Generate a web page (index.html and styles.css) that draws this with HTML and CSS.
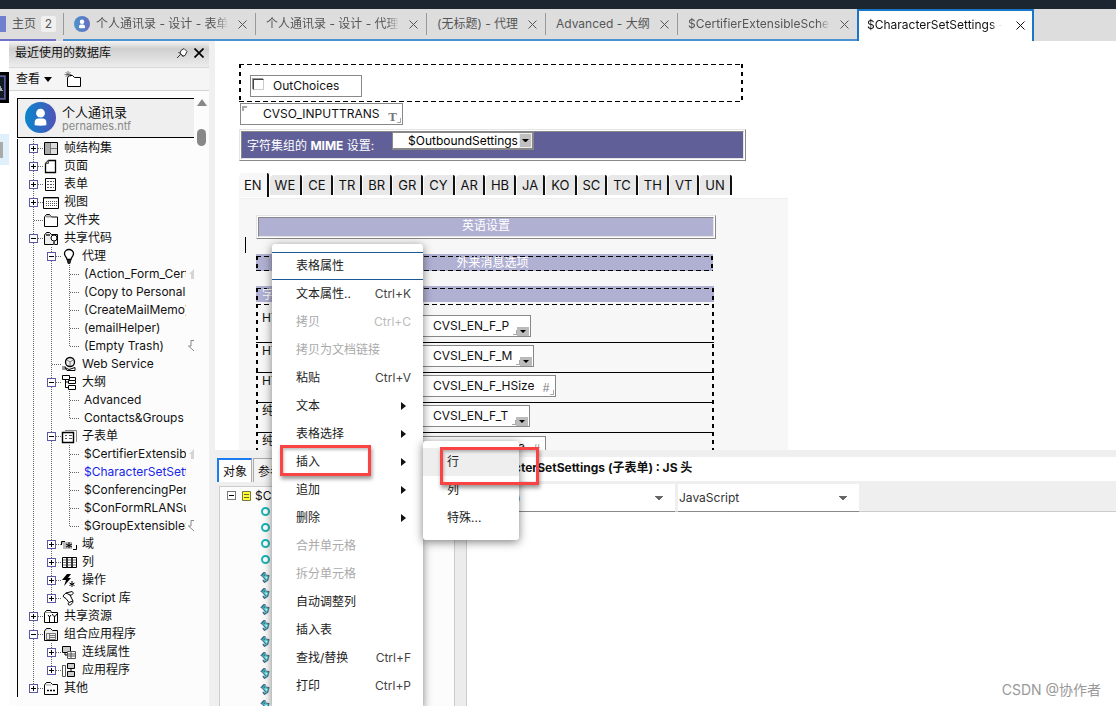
FILE: index.html
```html
<!DOCTYPE html>
<html lang="zh-CN">
<head>
<meta charset="utf-8">
<title>$CharacterSetSettings - 子表单</title>
<link rel="stylesheet" href="styles.css">
</head>
<body>
<svg class="defs" aria-hidden="true">
  <defs>
    <linearGradient id="avatar" x1="0" x2="1"><stop offset="0" stop-color="#0a86cc"/><stop offset="1" stop-color="#4f52b8"/></linearGradient>
    <linearGradient id="avatar-soft" x1="0" x2="1"><stop offset="0" stop-color="#4a93cc"/><stop offset="1" stop-color="#6a6cc0"/></linearGradient>
  </defs>
  <symbol id="x" viewBox="0 0 9 9"><path d="M.5.5l8 8M8.500.5l-8 8" fill="none" stroke="currentColor"/></symbol>
  <symbol id="frameset" viewBox="0 0 16 16"><path d="M1.500 2.500h13v12h-13z" fill="#ddd" stroke="#000"/><path d="M2 3h5v11H2z" fill="#aaa"/><path d="M7.500 3v11M8 8.500h6" stroke="#777"/></symbol>
  <symbol id="page" viewBox="0 0 16 16"><path d="M5.500 2.500h7v12h-10v-9z" fill="#fff" stroke="#000" stroke-width="1.300"/><path d="M2.500 5.500h3v-3" fill="#aaa" stroke="#555"/></symbol>
  <symbol id="form" viewBox="0 0 16 16"><path d="M2.500 2.500h10v12h-10z" fill="#fff" stroke="#000"/><path d="M4 5.500h2m1 0h4M4 8.500h2m1 0h4M4 11.500h2m1 0h4" stroke="#555" stroke-dasharray="2 1"/></symbol>
  <symbol id="view" viewBox="0 0 16 16"><path d="M.5 3.500h15v11h-15z" fill="#fff" stroke="#000"/><path d="M1 4.500h14" stroke="#999"/><path d="M3 7.500h11M3 9.500h11M3 11.500h11" stroke="#555" stroke-dasharray="1 1"/></symbol>
  <symbol id="folder" viewBox="0 0 16 16"><path d="M1.500 14.500V5l2-2.500h3l2 2.500h6v9.500z" fill="#fff" stroke="#000"/><path d="M3 4.500h5" stroke="#999" stroke-width="2"/></symbol>
  <symbol id="code" viewBox="0 0 16 16"><path d="M1.500 14.500V5l2-2.500h3l2 2h6v10z" fill="#eee" stroke="#000"/><circle cx="11" cy="8" r="3" fill="#fff" stroke="#000"/><path d="M11 11v4M3 5h4" stroke="#555" stroke-width="2"/></symbol>
  <symbol id="bulb" viewBox="0 0 16 16"><path d="M6 11.500C6 9 3.500 8.500 3.500 5.500a4.500 4 0 0 1 9 0c0 3-2.500 3.500-2.500 6z" fill="#fff" stroke="#000" stroke-width="1.300"/><path d="M6 12h4v2l-1 2H7l-1-2z" fill="#222"/></symbol>
  <symbol id="web" viewBox="0 0 16 16"><circle cx="9" cy="6" r="4.500" fill="#eee" stroke="#000" stroke-width="1.300"/><path d="M6 4l3 2 3-2M9 6v4" fill="none" stroke="#777"/><path d="M1 10h4v4H1z" fill="#999"/><path d="M4 11.500l4 2 6-2v3H6z" fill="#fff" stroke="#000"/></symbol>
  <symbol id="outline" viewBox="0 0 16 16"><path d="M1.500 1.500h7v4h-7zM7.500 6.500h7v3h-7zM7.500 11.500h7v4h-7zM4.500 6v7.500h3M4.500 8h3M9 3.500h5.500V6" fill="#fff" stroke="#000"/></symbol>
  <symbol id="subform" viewBox="0 0 16 16"><path d="M4 2.500h11.500V14" fill="none" stroke="#888"/><path d="M1.500 4.500h11v10h-11z" fill="#fff" stroke="#000" stroke-width="1.400"/><path d="M4 7.500h2m2 0h3M4 10.500h2m2 0h3" stroke="#555"/></symbol>
  <symbol id="field" viewBox="0 0 16 16"><path d="M0 6h11v7H2V8H0z" fill="#bbb"/><path d="M.5 9V5.500H4M15.500 9v4.500H12" fill="none" stroke="#000"/><path d="M8 6v6M5 8l6 3M11 8l-6 3" stroke="#000"/></symbol>
  <symbol id="column" viewBox="0 0 16 16"><path d="M1.500 3.500h14v10h-14z" fill="#fff" stroke="#000"/><path d="M6 3v11M11 3v11" stroke="#000" stroke-width="1.600"/><path d="M2 6h13M2 8.500h13M2 11h13" stroke="#333" stroke-width=".7"/></symbol>
  <symbol id="action" viewBox="0 0 16 16"><path d="M6 2h4L7 6h3L3 14l2-6H1z" fill="#000"/><path d="M11 9v6M8.500 11l5 2.500M13.500 11l-5 2.500" stroke="#000"/></symbol>
  <symbol id="script" viewBox="0 0 16 16"><path d="M5 3l6-1.500c2 1 1 3-.5 3.500L9 5l3 6c0 2-2 4-3.500 4-2 0-1.500-2-.5-2.500L5 8.500 2.500 7c-1-1 1-3 2.500-4zM5 3l4 2M8 12.500l4-1.500" fill="#fff" stroke="#000"/></symbol>
  <symbol id="resource" viewBox="0 0 16 16"><path d="M1.500 14.500V5l2-2.500h4l1 2h6v10z" fill="#fff" stroke="#000"/><path d="M6.500 14V9l-1.500-2M6.500 9L8 7M11.500 14V8M9.500 6c0 3 4 3 4 0" fill="none" stroke="#000"/><path d="M3 4.500h5" stroke="#999"/></symbol>
  <symbol id="composite" viewBox="0 0 16 16"><path d="M1.500 14.500V5l2-2.500h4l2 2h5v10z" fill="#eee" stroke="#000"/><path d="M3.500 7.500h9v6h-9zM6.500 8v5M7 9.500h5M7 11.500h5" fill="none" stroke="#777"/></symbol>
  <symbol id="wiring" viewBox="0 0 16 16"><path d="M1.500 2.500h8v6h-8zM4 9v2h3" fill="#ccc" stroke="#000"/><path d="M6.500 7.500h8v7h-8zM7 10h7M7 12h7M10 8v6" fill="#fff" stroke="#555"/></symbol>
  <symbol id="app" viewBox="0 0 16 16"><path d="M1.500 3.500h3v11h-3z" fill="#fff" stroke="#555"/><path d="M6.500 1.500h7v5h-7zM6.500 9.500h7v5h-7zM10 7v2" fill="#ccc" stroke="#000"/></symbol>
  <symbol id="other" viewBox="0 0 16 16"><path d="M1.500 14.500V5l2-2.500h4l2 2h5v10z" fill="#fff" stroke="#000"/><path d="M3 5h5" stroke="#999"/><path d="M4 10.500h2m1 0h2m1 0h2" stroke="#000" stroke-width="1.500"/></symbol>
  <symbol id="up" viewBox="0 0 6 12"><path d="M6 1L1 6h2v5h3z" fill="#d5d5d5"/></symbol>
  <symbol id="down" viewBox="0 0 6 12"><path d="M6 11L.5 6H3V.5h3" fill="none" stroke="#888"/></symbol>
  <symbol id="event" viewBox="0 0 10 12"><path d="M5.500 1.500l-3 3 4 5M1 5l3-3.500M4 4l4.500 1-1 4-3 2-1.500-2" fill="none" stroke="#4d6d88" stroke-width="1.800"/><path d="M5.500 2l-2.500 2.500 3.500 4M5 4.500l3 1-1 3-2.500 1.500" fill="none" stroke="#2ee6e6"/></symbol>
  <symbol id="person" viewBox="0 0 32 32"><circle cx="16" cy="11.500" r="4.500" fill="#fff"/><path d="M10 24v-3q0-4 4-4h4q4 0 4 4v3q-6 1-12 0z" fill="#fff"/></symbol>
</svg>

<header class="titlebar"></header>
<nav class="tabs" aria-label="窗口">
  <div class="home"><i class="home-mark"></i><a href="#home">主页</a><span class="count">2</span></div>
  <div class="tab tab-a"><svg class="face" viewBox="0 0 32 32"><circle cx="16" cy="16" r="16" fill="url(#avatar-soft)"/><use href="#person"/></svg><a href="#t1">个人通讯录 - 设计 - 表单</a><button aria-label="关闭"><svg><use href="#x"/></svg></button></div>
  <div class="tab tab-b"><a href="#t2">个人通讯录 - 设计 - 代理</a><button aria-label="关闭"><svg><use href="#x"/></svg></button></div>
  <div class="tab tab-c"><a href="#t3">(无标题) - 代理</a><button aria-label="关闭"><svg><use href="#x"/></svg></button></div>
  <div class="tab tab-d"><a href="#t4">Advanced - 大纲</a><button aria-label="关闭"><svg><use href="#x"/></svg></button></div>
  <div class="tab tab-e"><a href="#t5">$CertifierExtensibleSchema</a><button aria-label="关闭"><svg><use href="#x"/></svg></button></div>
  <div class="tab active"><a href="#t6">$CharacterSetSettings - 子表单</a><button aria-label="关闭"><svg><use href="#x"/></svg></button></div>
</nav>

<div class="workspace">
  <div class="rail"><div class="rail-on"><i></i></div><div class="rail-off"><i></i></div></div>

  <aside class="sidebar">
    <div class="side-title"><h2>最近使用的数据库</h2>
      <button aria-label="固定"><svg class="pin" viewBox="0 0 12 12"><path d="M5 3.500l3-2 3 3-2 4-2 .5-3-3zM4.500 7.500L1 11M2.500 5l5 5" fill="#fff" stroke="#333"/></svg></button>
      <button aria-label="关闭"><svg class="shut" viewBox="0 0 10 10"><path d="M.5.5l9 9M9.500.5l-9 9" stroke="#000" stroke-width="1.700"/></svg></button></div>
    <div class="side-tools"><button>查看<i class="drop"></i></button>
      <button aria-label="新建文件夹"><svg class="newfolder" viewBox="0 0 18 17"><path d="M3.500 15.500v-9l2-2h3l2 2h6v9z" fill="#fff" stroke="#000"/><path d="M4 0v7M.5 3.500h7M1.500 1l5 5M6.500 1l-5 5" stroke="#555" stroke-width=".8"/></svg></button></div>
    <div class="side-body">
      <div class="tree-col">
        <div class="db"><svg viewBox="0 0 32 32"><circle cx="16" cy="16" r="16" fill="url(#avatar)"/><use href="#person"/></svg><div><strong>个人通讯录</strong><small>pernames.ntf</small></div></div>
        <ul class="tree">
          <li><div class="row"><button class="tg plus" aria-label="展开"></button><svg><use href="#frameset"/></svg><span>帧结构集</span></div></li>
          <li><div class="row"><button class="tg plus" aria-label="展开"></button><svg><use href="#page"/></svg><span>页面</span></div></li>
          <li><div class="row"><button class="tg plus" aria-label="展开"></button><svg><use href="#form"/></svg><span>表单</span></div></li>
          <li><div class="row"><button class="tg plus" aria-label="展开"></button><svg><use href="#view"/></svg><span>视图</span></div></li>
          <li><div class="row"><i class="tg-none"></i><svg><use href="#folder"/></svg><span>文件夹</span></div></li>
          <li><div class="row"><button class="tg" aria-label="折叠"></button><svg><use href="#code"/></svg><span>共享代码</span></div>
            <ul>
              <li><div class="row"><button class="tg" aria-label="折叠"></button><svg><use href="#bulb"/></svg><span>代理</span></div>
                <ul class="leaves">
                  <li><div class="row"><span>(Action_Form_Certifier)</span><svg class="scroll"><use href="#up"/></svg></div></li>
                  <li><div class="row"><span>(Copy to Personal</span></div></li>
                  <li><div class="row"><span>(CreateMailMemo)</span></div></li>
                  <li><div class="row"><span>(emailHelper)</span></div></li>
                  <li><div class="row"><span>(Empty Trash)</span><svg class="scroll"><use href="#down"/></svg></div></li>
                </ul></li>
              <li><div class="row"><i class="tg-none"></i><svg><use href="#web"/></svg><span>Web Service</span></div></li>
              <li><div class="row"><button class="tg" aria-label="折叠"></button><svg><use href="#outline"/></svg><span>大纲</span></div>
                <ul class="leaves">
                  <li><div class="row"><span>Advanced</span></div></li>
                  <li><div class="row"><span>Contacts&amp;Groups</span></div></li>
                </ul></li>
              <li><div class="row"><button class="tg" aria-label="折叠"></button><svg><use href="#subform"/></svg><span>子表单</span></div>
                <ul class="leaves">
                  <li><div class="row"><span>$CertifierExtensibleSchema</span><svg class="scroll"><use href="#up"/></svg></div></li>
                  <li><div class="row current"><span>$CharacterSetSettings</span></div></li>
                  <li><div class="row"><span>$ConferencingPerson</span></div></li>
                  <li><div class="row"><span>$ConFormRLANSub</span></div></li>
                  <li><div class="row"><span>$GroupExtensibleSchema</span><svg class="scroll"><use href="#down"/></svg></div></li>
                </ul></li>
              <li><div class="row"><button class="tg plus" aria-label="展开"></button><svg><use href="#field"/></svg><span>域</span></div></li>
              <li><div class="row"><button class="tg plus" aria-label="展开"></button><svg><use href="#column"/></svg><span>列</span></div></li>
              <li><div class="row"><button class="tg plus" aria-label="展开"></button><svg><use href="#action"/></svg><span>操作</span></div></li>
              <li><div class="row"><button class="tg plus" aria-label="展开"></button><svg><use href="#script"/></svg><span>Script 库</span></div></li>
            </ul></li>
          <li><div class="row"><button class="tg plus" aria-label="展开"></button><svg><use href="#resource"/></svg><span>共享资源</span></div></li>
          <li><div class="row"><button class="tg" aria-label="折叠"></button><svg><use href="#composite"/></svg><span>组合应用程序</span></div>
            <ul>
              <li><div class="row"><button class="tg plus" aria-label="展开"></button><svg><use href="#wiring"/></svg><span>连线属性</span></div></li>
              <li><div class="row"><button class="tg plus" aria-label="展开"></button><svg><use href="#app"/></svg><span>应用程序</span></div></li>
            </ul></li>
          <li><div class="row"><button class="tg plus" aria-label="展开"></button><svg><use href="#other"/></svg><span>其他</span></div></li>
        </ul>
      </div>
      <div class="scrollbar"><i class="sb-up"></i><i class="sb-thumb"></i></div>
    </div>
  </aside>

  <main class="main">
    <section class="form">
      <div class="choices dashed"><label class="field check"><input type="checkbox">OutChoices</label></div>
      <div class="field trans"><i class="corner-tl"></i><span>CVSO_INPUTTRANS</span><b class="kind">T</b><i class="corner"></i></div>
      <div class="bevel mime"><div class="fill"><span>字符集组的 <b>MIME</b> 设置:</span>
        <div class="combo"><span>$OutboundSettings</span><button aria-label="选择"><i></i></button></div></div></div>
      <div class="langs">
        <button class="on">EN</button><button>WE</button><button>CE</button><button>TR</button><button>BR</button><button>GR</button><button>CY</button><button>AR</button><button>HB</button><button>JA</button><button>KO</button><button>SC</button><button>TC</button><button>TH</button><button>VT</button><button>UN</button>
      </div>
      <div class="panel">
        <div class="bevel lang-title"><div class="fill">英语设置</div></div>
        <i class="caret"></i>
        <div class="strip"><div class="dashed">外来消息选项</div></div>
        <div class="opts">
          <div class="opts-head">字符集选项</div>
          <div class="opt"><span>HTML</span><div class="field"><span>CVSI_EN_F_P</span><i class="corner"></i><i class="arrow"></i></div></div>
          <div class="opt"><span>HTML</span><div class="field"><span>CVSI_EN_F_M</span><i class="corner"></i><i class="arrow"></i></div></div>
          <div class="opt"><span>HTML</span><div class="field"><span>CVSI_EN_F_HSize</span><b class="kind">#</b><i class="corner"></i></div></div>
          <div class="opt"><span>纯文本</span><div class="field"><span>CVSI_EN_F_T</span><i class="corner"></i><i class="arrow"></i></div></div>
          <div class="opt"><span>纯文本</span><div class="field"><span>CVSI_EN_F_Siza</span><b class="kind">#</b><i class="corner"></i></div></div>
        </div>
      </div>
    </section>

    <section class="lower">
      <div class="objects">
        <div class="obj-tabs"><button class="on">对象</button><button>参考</button></div>
        <div class="obj-tree">
          <div class="obj-root"><button class="tg gray" aria-label="折叠"></button><svg viewBox="0 0 9 10"><path d="M.5.5h8v9h-8z" fill="#ff3" stroke="#774"/><path d="M2 3.500h5M2 6.500h5" stroke="#663"/></svg><span>$CharacterSetSettings</span></div>
          <i class="ring"></i><i class="ring"></i><i class="ring"></i><i class="ring"></i>
          <svg><use href="#event"/></svg><svg><use href="#event"/></svg><svg><use href="#event"/></svg><svg><use href="#event"/></svg><svg><use href="#event"/></svg><svg><use href="#event"/></svg><svg><use href="#event"/></svg><svg><use href="#event"/></svg><svg><use href="#event"/></svg>
        </div>
      </div>
      <div class="code">
        <h3>$CharacterSetSettings (子表单) : JS 头</h3>
        <div class="pickers">
          <select class="run" aria-label="运行"><option>客户机(C)</option></select>
          <select class="lang" aria-label="语言"><option>JavaScript</option></select>
        </div>
        <textarea aria-label="代码"></textarea>
      </div>
    </section>
  </main>
</div>

<div class="menu" role="menu">
  <button class="first" role="menuitem">表格属性</button>
  <button role="menuitem">文本属性..<kbd>Ctrl+K</kbd></button>
  <button role="menuitem" disabled>拷贝<kbd>Ctrl+C</kbd></button>
  <button role="menuitem" disabled>拷贝为文档链接</button>
  <button role="menuitem">粘贴<kbd>Ctrl+V</kbd></button>
  <button role="menuitem">文本<i class="sub"></i></button>
  <button role="menuitem">表格选择<i class="sub"></i></button>
  <button role="menuitem">插入<i class="sub"></i></button>
  <button role="menuitem">追加<i class="sub"></i></button>
  <button role="menuitem">删除<i class="sub"></i></button>
  <button role="menuitem" disabled>合并单元格</button>
  <button role="menuitem" disabled>拆分单元格</button>
  <button role="menuitem">自动调整列</button>
  <button role="menuitem">插入表</button>
  <button role="menuitem">查找/替换<kbd>Ctrl+F</kbd></button>
  <button role="menuitem">打印<kbd>Ctrl+P</kbd></button>
</div>
<div class="menu submenu" role="menu">
  <button class="hover" role="menuitem">行</button>
  <button role="menuitem">列</button>
  <button role="menuitem">特殊...</button>
</div>
<i class="mark mark-insert"></i>
<i class="mark mark-row"></i>
<p class="watermark">CSDN @协作者</p>
</body>
</html>
```
FILE: styles.css
```css
* { box-sizing: border-box; }
html, body { height: 100%; }
body {
  margin: 0; display: flex; flex-direction: column; overflow: hidden; position: relative;
  font: 12px/18px Inter, "Noto Sans CJK SC", sans-serif; color: #111; background: #fff;
}
button, select, textarea { font: inherit; color: inherit; border: 0; padding: 0; margin: 0; background: none; }
button { display: block; text-align: left; white-space: nowrap; }
a { color: inherit; text-decoration: none; }
svg, i { display: block; flex: none; }
h2, h3, p, ul { margin: 0; padding: 0; list-style: none; }
.defs { position: absolute; width: 0; height: 0; }

/* window tabs */
.titlebar { flex: none; height: 9px; background: #1b2630; }
.tabs { flex: none; display: flex; height: 32px; background: #ddd; color: #555; }
.home { display: flex; align-items: center; width: 56px; border-bottom: 2px solid #6f70c8; margin-right: 7px; }
.home-mark { width: 6px; height: 16px; background: #7080cf; margin-right: 6px; }
.home a { width: 30px; white-space: nowrap; }
.count { width: 16px; height: 16px; line-height: 16px; text-align: center; background: #f0f0f0; border-radius: 2px; }
.tab { display: flex; align-items: center; padding-right: 8px; border-bottom: 2px solid #4c92d0; min-width: 0; }
.tab::before { content: ""; width: 1px; height: 22px; background: #999; margin-right: 10px; }
.tab a { flex: 1; overflow: hidden; white-space: nowrap; margin-right: 10px; -webkit-mask: linear-gradient(to left, transparent, #000 12px); mask: linear-gradient(to left, transparent, #000 12px); }
.tab button, .tab svg { width: 9px; height: 9px; }
.tab .face { width: 16px; height: 16px; margin-right: 6px; }
.tab-a { width: 192px; }
.tab-b { width: 171px; }
.tab-c { width: 119px; }
.tab-d { width: 132px; }
.tab-c a, .tab-d a { -webkit-mask: none; mask: none; margin-right: 8px; }
.tab-e { width: 180px; }
.tab.active { width: 177px; background: #fff; color: #111; border: 2px solid #1a76c8; border-bottom: 0; padding: 0 7px 2px 8px; }
.tab.active a { margin-right: 14px; }
.tab.active::before { display: none; }

/* workspace frame */
.workspace { flex: 1; display: flex; min-height: 0; }
.rail { flex: none; width: 9px; padding-top: 31px; }
.rail-on { height: 31px; background: #445; border: solid #000; border-width: 3px 3px 3px 0; padding: 1px 1px 1px 0; }
.rail-on i { height: 23px; background: #111b24; border: solid #5558b8; border-width: 1px 1px 1px 0; padding-top: 8px; }
.rail-on i::after { content: ""; display: block; width: 3px; height: 6px; background: linear-gradient(to top right, #aaa 50%, transparent 50%); }
.rail-off { margin-top: 31px; height: 31px; background: #dff0fa; padding-top: 8px; }
.rail-off i { width: 3px; height: 16px; background: #aaa; }
.sidebar { flex: none; width: 206px; border-right: 6px solid #f0f0f0; display: flex; flex-direction: column; background: #fcfcfc; }
.side-title { height: 27px; display: flex; align-items: center; padding: 0 5px 2px 6px; background: linear-gradient(#f4f4f4, #cfcfcf 30%, #dcdcdc 60%, #ececec); border-bottom: 1px solid #d8d8d8; }
.side-title h2 { flex: 1; font: inherit; }
.pin { width: 12px; height: 12px; margin-right: 6px; }
.shut { width: 10px; height: 10px; }
.side-tools { height: 23px; display: flex; align-items: center; gap: 12px; padding-left: 7px; background: #f5f5f5; border-bottom: 1px solid #d4d4d4; }
.side-tools button { display: flex; align-items: center; gap: 4px; }
.drop { border: 4px solid transparent; border-top: 5px solid #000; border-bottom: 0; }
.newfolder { width: 18px; height: 17px; }
.side-body { flex: 1; display: flex; padding: 7px 0 9px 8px; min-height: 0; }
.tree-col { flex: 1; min-width: 0; display: flex; flex-direction: column; }
.db { flex: none; height: 40px; margin-bottom: 1px; display: flex; align-items: center; gap: 6px; padding: 0 0 1px 7px; background: #efefef; border: 1px solid #000; border-right: 0; }
.db svg { width: 31px; height: 31px; }
.db strong { display: block; font-size: 13px; font-weight: 400; line-height: 16px; }
.db small { display: block; font-size: 11px; line-height: 12px; color: #888; }
.scrollbar { flex: none; width: 15px; padding: 1px 3px; display: flex; flex-direction: column; align-items: center; gap: 23px; }
.sb-up { border: 5px solid transparent; border-bottom: 7px solid #888; border-top: 0; }
.sb-thumb { width: 9px; height: 17px; border-radius: 5px; background: #888; }

/* design tree */
.tree { flex: 1; border-left: 1px solid #000; padding-left: 6px; overflow: hidden; }
.tree ul { padding-left: 18px; }
.tree li { background: repeating-linear-gradient(#666 0 1px, transparent 1px 2px) 9px 0 / 1px 100% no-repeat; }
.tree li:last-child { background-size: 1px 9px; }
.row { display: flex; align-items: center; height: 18px; padding: 0 0 0 5px; background: repeating-linear-gradient(90deg, #666 0 1px, transparent 1px 2px) 10px 9px / 9px 1px no-repeat; }
.row svg { width: 16px; height: 16px; margin: 0 5px; }
.row span { flex: 1; overflow: hidden; white-space: nowrap; margin-right: 8px; }
.leaves .row { padding-left: 24px; }
.row .scroll { width: 6px; height: 12px; margin: 0 0 0 -6px; }
.current { color: #1726e8; }
.tg { flex: none; width: 9px; height: 9px; border: 1px solid #5a5aa8; background: linear-gradient(#000, #000) 50% 50% / 5px 1px no-repeat #fff; }
.tg.plus { background: linear-gradient(#000, #000) 50% 50% / 5px 1px no-repeat, linear-gradient(#000, #000) 50% 50% / 1px 5px no-repeat, #fff; }
.tg.gray { border-color: #777; }
.tg-none { width: 9px; }

/* form canvas */
.main { flex: 1; min-width: 0; display: flex; flex-direction: column; }
.form { flex: 386; min-height: 0; overflow: hidden; padding: 23px 0 0 24px; }
.dashed {
  background:
    repeating-linear-gradient(90deg, #000 0 5px, transparent 5px 8px) 0 0 / 100% 1px no-repeat,
    repeating-linear-gradient(90deg, #000 0 5px, transparent 5px 8px) 0 100% / 100% 1px no-repeat,
    repeating-linear-gradient(#000 0 4px, transparent 4px 8px) 0 0 / 2px 100% no-repeat,
    repeating-linear-gradient(#000 0 4px, transparent 4px 8px) 100% 0 / 2px 100% no-repeat;
}
.choices { max-width: 504px; height: 38px; padding: 11px; }
.field { display: flex; width: max-content; height: 22px; align-items: center; background: #fff; border: 1px solid #888; }
.check { width: 112px; padding-left: 2px; }
.check input { appearance: none; width: 11px; height: 11px; margin: 0 9px 4px 0; background: #fff; border: 1px solid #444; border-right-color: #ccc; border-bottom-color: #ccc; box-shadow: -1px -1px #999; }
.trans { width: 163px; margin: 1px 0 4px 1px; justify-content: flex-end; }
.trans span { flex: 1; }
.corner-tl { width: 5px; height: 5px; margin: 0 16px 12px 1px; border: 2px solid #aaa; border-right: 0; border-bottom: 0; }
.kind { font: bold 13px/14px "Liberation Serif", serif; color: #777; align-self: flex-end; margin-left: 8px; }
.corner { width: 4px; height: 5px; border: 1px solid #aaa; border-top: 0; border-left: 0; align-self: flex-end; margin: 0 1px 1px 1px; }
.trans .corner { margin-left: 0; }
.bevel { border: 1px solid; border-color: #e5e5e5 #888 #888 #e5e5e5; padding: 1px; background: #fff; }
.fill { border: 1px solid; border-color: #888 #e5e5e5 #e5e5e5 #888; }
.mime { max-width: 507px; height: 32px; margin-right: 1px; }
.mime .fill { height: 28px; background: #605f97; color: #fff; display: flex; }
.mime .fill > span { width: 150px; padding: 5px 0 0 5px; }
.combo { display: flex; width: 142px; height: 18px; background: #fff; border: 1px solid #888; border-right-width: 2px; border-bottom-width: 2px; color: #000; line-height: 15px; padding-left: 15px; }
.combo span { flex: 1; }
.combo button { width: 13px; background: #c0c0c0; border: 1px solid #eee; padding: 5px 2px; }
.combo button i, .arrow { border: 3px solid transparent; border-top-color: #000; border-bottom: 0; }
.langs { display: flex; gap: 1px; padding-top: 10px; height: 37px; align-items: center; }
.langs button { height: 20px; font-size: 13px; line-height: 20px; padding: 0 5px; background: #e8e8e8; border-right: 2px solid #111; border-radius: 4px 2px 0 0; }
.langs .on { height: 24px; background: #f7f7f7; }
.panel { position: relative; max-width: 549px; height: 320px; background: #f7f7f7; border-top: 1px solid #efefef; padding: 16px 72px 0 17px; }
.lang-title { width: 460px; height: 24px; }
.lang-title .fill { height: 20px; line-height: 16px; text-align: center; background: #b0b0d2; color: #fff; }
.caret { position: absolute; left: 6px; top: 38px; width: 1px; height: 16px; background: #000; }
.strip { width: 457px; margin-top: 15px; padding-top: 2px; background: #b0b0d2; color: #fff; text-align: center; }
.strip .dashed { height: 15px; line-height: 13px; padding-left: 16px; }
.opts {
  width: 458px; margin-top: 15px; height: 200px;
  background:
    repeating-linear-gradient(#000 0 4px, transparent 4px 8px) 0 2px / 2px 100% no-repeat,
    repeating-linear-gradient(#000 0 4px, transparent 4px 8px) 100% 2px / 2px 100% no-repeat,
    repeating-linear-gradient(90deg, #000 0 5px, transparent 5px 8px) 0 2px / 100% 1px no-repeat,
    repeating-linear-gradient(90deg, #000 0 5px, transparent 5px 8px) 0 18px / 100% 1px no-repeat,
    linear-gradient(#b0b0d2, #b0b0d2) 0 0 / 100% 16px no-repeat;
}
.opts-head { height: 24px; line-height: 18px; padding-left: 6px; color: #fff; }
.opt { height: 30px; display: flex; align-items: flex-end; padding: 0 0 5px 6px; border-bottom: 1px solid #000; line-height: 16px; }
.opts-head + .opt { height: 33px; }
.opt:last-child { border-bottom: 0; }
.opt > span { width: 148px; align-self: flex-start; }
.opt .field { padding-left: 22px; line-height: 18px; }
.opt .kind { font: 12px/14px "Liberation Mono", monospace; }
.opt .corner { margin-left: 4px; }
.opt .kind + .corner { margin-left: 0; }
.arrow { box-sizing: content-box; width: 0; align-self: flex-end; outline: 3px solid #bbb; margin: 0 4px 3px 2px; background: #bbb; }

/* objects and script */
.lower { flex: 256; min-height: 0; display: flex; background: #efefef; }
.objects { flex: none; width: 240px; padding: 8px 0 0 2px; display: flex; flex-direction: column; }
.obj-tabs { display: flex; gap: 1px; height: 28px; }
.obj-tabs button { width: 35px; height: 24px; padding: 2px 0 0 4px; background: #f3f3f3; border: solid #aaa; border-width: 1px 0 0 1px; overflow: hidden; }
.obj-tabs .on { background: #fff; border: solid #1a7cf0; border-width: 2px 0 0 2px; border-right: 1px solid #aaa; }
.obj-tree { flex: 1; overflow: hidden; margin-left: 2px; background: #fcfcfc; border: 1px solid #ccc; border-bottom: 0; }
.obj-root { display: flex; align-items: center; height: 17px; padding-left: 7px; }
.obj-root .tg { margin-right: 6px; }
.obj-root svg { width: 9px; height: 10px; }
.obj-root span { margin-left: 4px; }
.ring { width: 9px; height: 9px; border: 2px solid #1cb4b4; border-radius: 5px; background: #fff; margin: 3px 0 7px 41px; }
.obj-tree > svg { width: 10px; height: 12px; margin: 2px 0 4px 40px; }
.code { flex: 1; min-width: 0; margin-top: 7px; display: flex; flex-direction: column; border-left: 11px solid #ececec; }
.code h3 { height: 24px; font: bold 12px/22px Inter, "Noto Sans CJK SC", sans-serif; padding-left: 5px; background: #fff; }
.pickers { display: flex; gap: 3px; padding-top: 3px; height: 31px; border-bottom: 1px solid #ccc; }
.pickers select {
  appearance: none; height: 28px; padding: 0 0 0 1px; border-bottom: 1px solid #888; color: #333;
  background:
    linear-gradient(to bottom left, #666 50%, transparent 50%) right 16px top 12px / 4px 5px no-repeat,
    linear-gradient(to bottom right, #666 50%, transparent 50%) right 12px top 12px / 4px 5px no-repeat, #fff;
}
.run { width: 209px; }
.lang { width: 181px; }
textarea { flex: 1; resize: none; background: #fff; border-left: 1px solid #ccc; }

/* pop-up menus */
.menu { position: absolute; left: 272px; top: 244px; width: 151px; padding: 8px 0; background: #fff; border-radius: 3px; box-shadow: 0 2px 10px rgba(0, 0, 0, .5); }
.menu button { display: flex; align-items: center; width: 100%; height: 28px; padding: 0 12px 0 24px; color: #222; }
.menu .first { border: solid #1a5a94; border-width: 1px 0; }
.menu button:disabled { color: #aaa; }
.menu kbd { font: inherit; margin-left: auto; color: #444; }
.menu button:disabled kbd { color: #bbb; }
.sub { margin: 0 5px 0 auto; border: 4px solid transparent; border-left: 5px solid #111; border-right: 0; }
.submenu { left: 423px; top: 441px; width: 96px; padding: 7px 0 8px; }
.submenu .hover { background: #eee; }
.mark { position: absolute; border: 3px solid #fa4444; box-shadow: 1px 3px 4px rgba(0, 0, 0, .4), inset 1px 2px 3px rgba(0, 0, 0, .25); }
.mark-insert { left: 280px; top: 445px; width: 91px; height: 31px; }
.mark-row { left: 440px; top: 447px; width: 99px; height: 38px; }
.watermark { position: absolute; right: 15px; bottom: 6px; font-size: 14px; line-height: 20px; color: #999; }
```
